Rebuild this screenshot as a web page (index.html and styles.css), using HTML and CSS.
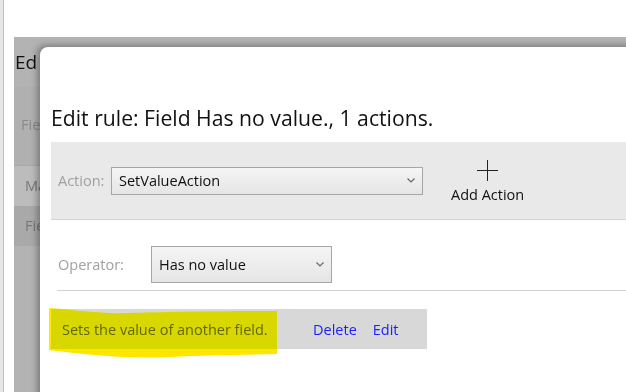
FILE: index.html
```html
<!DOCTYPE html>
<html lang="en">
  <head>
    <meta charset="UTF-8" />
    <title>Edit rule</title>
    <link rel="stylesheet" href="styles.css">
  </head>

  <body>
    <div class="desk">
      <div class="edge"></div>
      <div class="backdrop">
        <div class="back-title">Ed</div>
        <div class="back-panel">
          <div class="back-label">Fie</div>
        </div>
        <div class="back-row">Ma</div>
        <div class="back-row dark">Fie</div>
      </div>

      <div class="dialog">
        <h2 class="title">Edit rule: Field Has no value., 1 actions.</h2>

        <div class="action-bar">
          <span class="label">Action:</span>
          <div class="select wide">
            <span>SetValueAction</span>
            <svg class="chev" width="8" height="5" viewBox="0 0 8 5"><path d="M0.5 0.5 L4 4 L7.5 0.5" fill="none" stroke="#666" stroke-width="1.2"/></svg>
          </div>
          <div class="add-action">
            <svg width="21" height="21" viewBox="0 0 21 21"><path d="M10.5 0 V21 M0 10.5 H21" stroke="#222" stroke-width="1"/></svg>
            <span>Add Action</span>
          </div>
        </div>

        <div class="operator-row">
          <span class="label op">Operator:</span>
          <div class="select narrow">
            <span>Has no value</span>
            <svg class="chev" width="8" height="5" viewBox="0 0 8 5"><path d="M0.5 0.5 L4 4 L7.5 0.5" fill="none" stroke="#666" stroke-width="1.2"/></svg>
          </div>
        </div>
        <div class="divider"></div>

        <div class="item">
          <span class="desc">Sets the value of another field.</span>
          <a class="link" href="#">Delete</a>
          <a class="link" href="#">Edit</a>
          <svg class="marker" width="228" height="50" viewBox="0 0 228 50">
            <path d="M0,0 C30,2 50,6 80,5 S170,3 228,3 L228,46 C190,47 160,47 120,49 S40,47 0,42 Z" fill="#ffe600"/>
          </svg>
        </div>
      </div>
    </div>
  </body>
</html>
```

FILE: styles.css
```css
body {
  margin: 0;
  font-family: "Open Sans", "Noto Sans", sans-serif;
  background-color: #fff;
  overflow: hidden;
}

.desk {
  position: relative;
  display: flex;
  width: 626px;
  height: 392px;
  overflow: hidden;
}

.edge {
  width: 3px;
  background-color: #e6e6e6;
  border-right: 1px solid #c2c2c2;
  margin-right: 10px;
}

.backdrop {
  flex: 1;
  margin-top: 37px;
  background-color: #b3b3b3;
  overflow: hidden;
  white-space: nowrap;
}

.back-title {
  height: 50px;
  padding-left: 1px;
  font-size: 19px;
  line-height: 50px;
  color: #111;
}

.back-panel {
  height: 78px;
  border-bottom: 1px solid #a8a8a8;
  background-color: #b0b0b0;
}

.back-label {
  padding: 28px 0 0 7px;
  font-size: 14.5px;
  color: #8a8a8a;
}

.back-row {
  height: 40px;
  padding-left: 11px;
  font-size: 14.5px;
  line-height: 40px;
  color: #777;
  background-color: #bcbcbc;
}

.back-row.dark {
  background-color: #a9a9a9;
}

.dialog {
  position: absolute;
  left: 40px;
  top: 47px;
  right: -20px;
  bottom: -20px;
  padding-left: 11px;
  background-color: #fff;
  border-radius: 8px 0 0 0;
  box-shadow: -3px -2px 6px rgba(0, 0, 0, 0.3);
}

.title {
  margin: 56px 0 9px 0;
  font-size: 21.2px;
  font-weight: normal;
  line-height: 30px;
  color: #111;
  white-space: nowrap;
}

.action-bar {
  display: flex;
  align-items: center;
  height: 77px;
  padding-left: 7px;
  background-color: #e9e9e9;
  border-bottom: 1px solid #d4d4d4;
}

.label {
  width: 53px;
  font-size: 14.5px;
  color: #a0a0a0;
}

.label.op {
  width: 93px;
}

.select {
  display: flex;
  align-items: center;
  justify-content: space-between;
  box-sizing: border-box;
  padding: 0 7px 0 7px;
  border: 1px solid #a6a6a6;
  background: linear-gradient(#f5f5f5, #e5e5e5);
  font-size: 14.5px;
  color: #111;
}

.select.wide {
  width: 312px;
  height: 28px;
}

.select.narrow {
  width: 181px;
  height: 37px;
}

.add-action {
  display: flex;
  flex-direction: column;
  align-items: center;
  margin-left: 28px;
  margin-top: 2px;
  font-size: 14.5px;
  color: #111;
}

.add-action svg {
  margin-bottom: 4px;
}

.operator-row {
  display: flex;
  align-items: center;
  margin-top: 26px;
  padding-left: 7px;
}

.divider {
  margin: 7px 0 0 6px;
  border-top: 1px solid #d2d2d2;
}

.item {
  position: relative;
  display: flex;
  align-items: center;
  width: 376px;
  height: 40px;
  margin-top: 18px;
  padding-left: 11px;
  box-sizing: border-box;
  background-color: #d8d8d8;
  font-size: 14.5px;
}

.desc {
  width: 251px;
  color: #666;
  white-space: nowrap;
}

.link {
  margin-right: 16px;
  color: #2020ff;
  text-decoration: none;
}

.marker {
  position: absolute;
  left: -2px;
  top: -1px;
  mix-blend-mode: darken;
}
```
